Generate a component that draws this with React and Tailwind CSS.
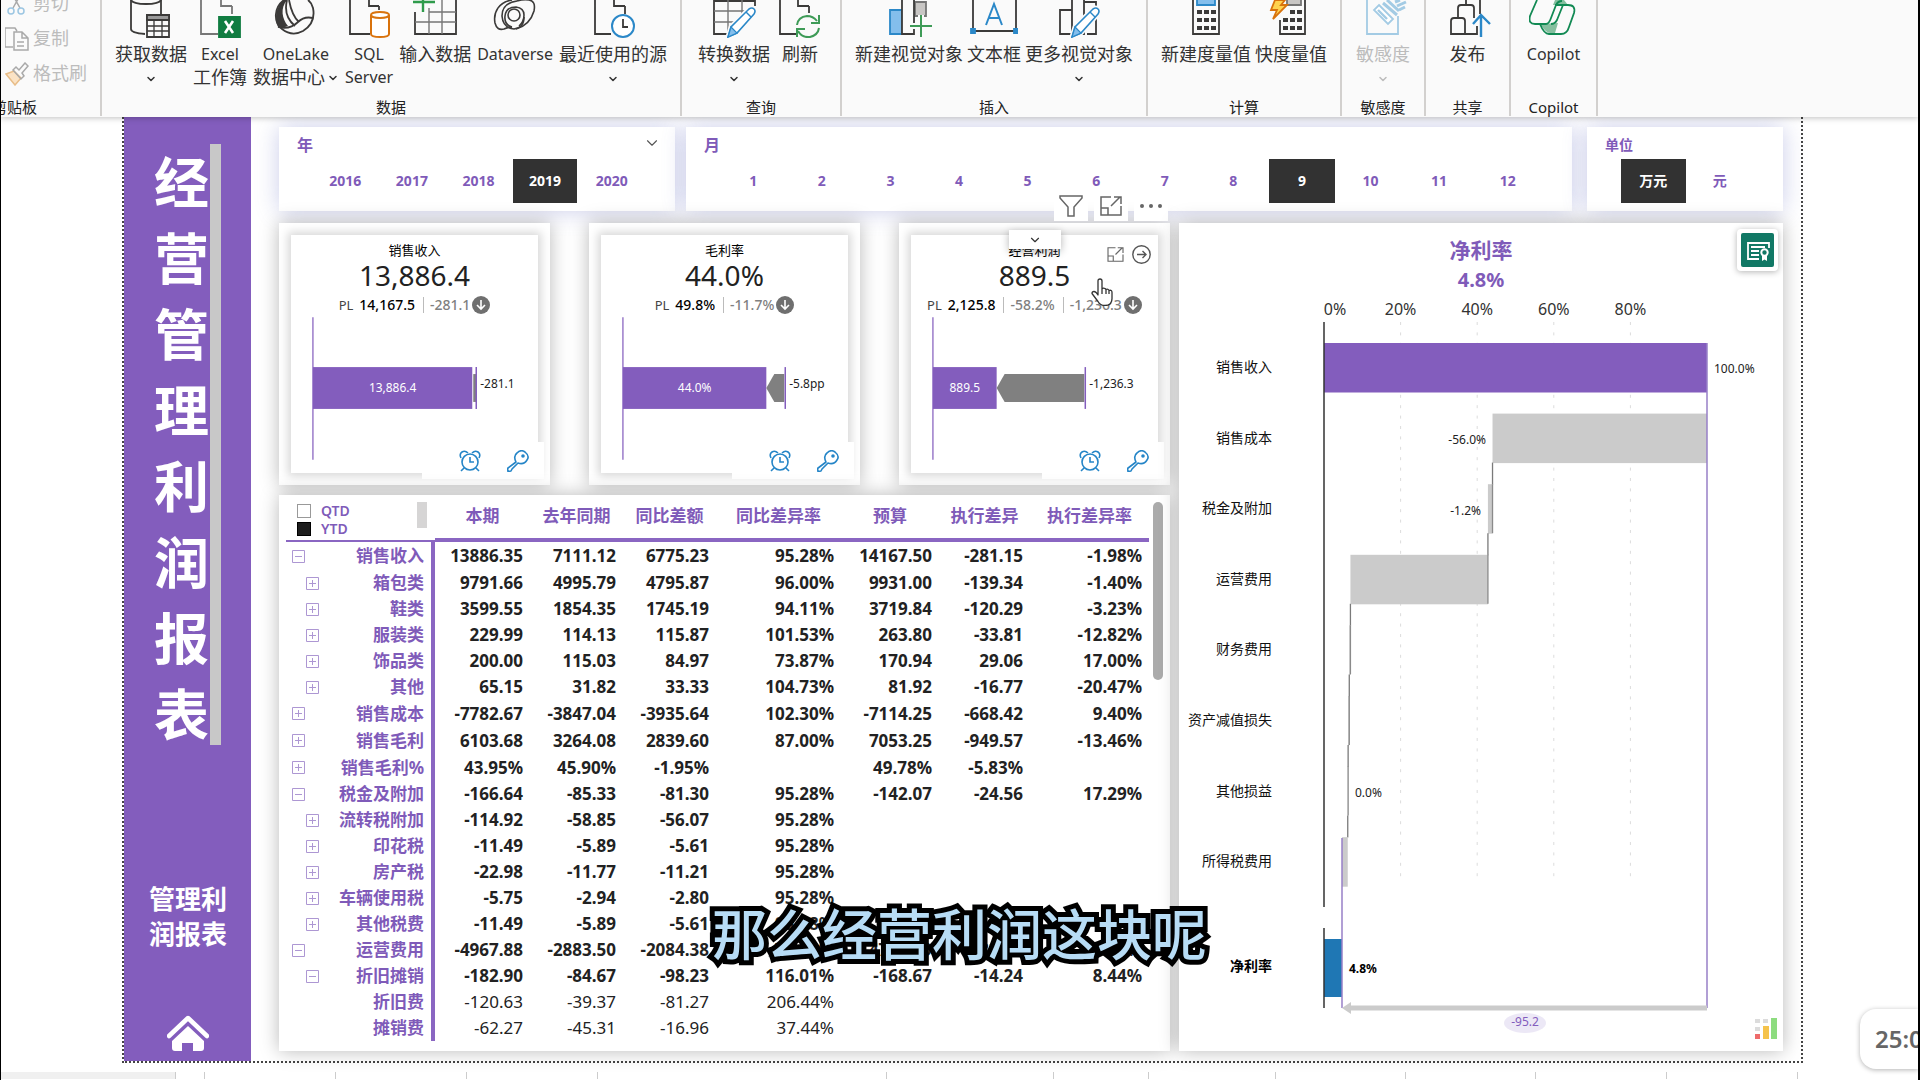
import { useState } from "react";
import { ChevronDown } from "lucide-react";

const FONT = "font-['Noto_Sans','Noto_Sans_CJK_SC',sans-serif]";

const YEARS = ["2016", "2017", "2018", "2019", "2020"];
const MONTHS = ["1", "2", "3", "4", "5", "6", "7", "8", "9", "10", "11", "12"];
const UNITS = ["万元", "元"];

const COLUMNS = ["本期", "去年同期", "同比差额", "同比差异率", "预算", "执行差异", "执行差异率"];

// level: 缩进层级, open: 是否展开 (null = 没有下级)
const ROWS = [
  { name: "销售收入", level: 0, open: true, values: ["13886.35", "7111.12", "6775.23", "95.28%", "14167.50", "-281.15", "-1.98%"] },
  { name: "箱包类", level: 1, open: false, values: ["9791.66", "4995.79", "4795.87", "96.00%", "9931.00", "-139.34", "-1.40%"] },
  { name: "鞋类", level: 1, open: false, values: ["3599.55", "1854.35", "1745.19", "94.11%", "3719.84", "-120.29", "-3.23%"] },
  { name: "服装类", level: 1, open: false, values: ["229.99", "114.13", "115.87", "101.53%", "263.80", "-33.81", "-12.82%"] },
  { name: "饰品类", level: 1, open: false, values: ["200.00", "115.03", "84.97", "73.87%", "170.94", "29.06", "17.00%"] },
  { name: "其他", level: 1, open: false, values: ["65.15", "31.82", "33.33", "104.73%", "81.92", "-16.77", "-20.47%"] },
  { name: "销售成本", level: 0, open: false, values: ["-7782.67", "-3847.04", "-3935.64", "102.30%", "-7114.25", "-668.42", "9.40%"] },
  { name: "销售毛利", level: 0, open: false, values: ["6103.68", "3264.08", "2839.60", "87.00%", "7053.25", "-949.57", "-13.46%"] },
  { name: "销售毛利%", level: 0, open: false, values: ["43.95%", "45.90%", "-1.95%", "", "49.78%", "-5.83%", ""] },
  { name: "税金及附加", level: 0, open: true, values: ["-166.64", "-85.33", "-81.30", "95.28%", "-142.07", "-24.56", "17.29%"] },
  { name: "流转税附加", level: 1, open: false, values: ["-114.92", "-58.85", "-56.07", "95.28%", "", "", ""] },
  { name: "印花税", level: 1, open: false, values: ["-11.49", "-5.89", "-5.61", "95.28%", "", "", ""] },
  { name: "房产税", level: 1, open: false, values: ["-22.98", "-11.77", "-11.21", "95.28%", "", "", ""] },
  { name: "车辆使用税", level: 1, open: false, values: ["-5.75", "-2.94", "-2.80", "95.28%", "", "", ""] },
  { name: "其他税费", level: 1, open: false, values: ["-11.49", "-5.89", "-5.61", "95.28%", "", "", ""] },
  { name: "运营费用", level: 0, open: true, values: ["-4967.88", "-2883.50", "-2084.38", "72.29%", "-4785.39", "-182.49", "3.81%"] },
  { name: "折旧摊销", level: 1, open: true, values: ["-182.90", "-84.67", "-98.23", "116.01%", "-168.67", "-14.24", "8.44%"] },
  { name: "折旧费", level: 2, open: null, values: ["-120.63", "-39.37", "-81.27", "206.44%", "", "", ""] },
  { name: "摊销费", level: 2, open: null, values: ["-62.27", "-45.31", "-16.96", "37.44%", "", "", ""] },
];

const rowHeight = (row, i) => {
  if (i === 0) return "h-7";
  return row.level === 0 && !row.open ? "h-[27px]" : "h-[26px]";
};

/* ---------- ribbon icons, 48 x 38, top part is scrolled away ---------- */

const Pencil = ({ x }) => (
  <g transform={`translate(${x} 0)`}>
    <path d="M3 37l3-10L24 9q3-2 5 0t0 5L12 33z" fill="#fff" stroke="#fafafa" strokeWidth="5" />
    <path d="M3 37l3-10L24 9q3-2 5 0t0 5L12 33z" fill="#fff" stroke="#2b88c8" strokeWidth="1.6" />
    <path d="M3 37l3-10 6 6z" fill="#83beec" stroke="#2b88c8" strokeWidth="1.2" />
    <path d="M21 12l5 5" stroke="#2b88c8" strokeWidth="1.4" />
  </g>
);

const ICONS = {
  database: (
    <g>
      <path d="M4 0v29q0 4 14 5M34 0v14" />
      <path d="M4 0q2 4 15 4t15-4" />
      <path d="M20 15h22v22H20z" fill="#fafafa" />
      <path d="M20 15h22v5H20z" fill="#9a9a9a" />
      <path d="M27 20v17M35 20v17M20 26h22M20 31h22" strokeWidth="1.3" />
    </g>
  ),
  excel: (
    <g>
      <path d="M22 34H5V0M25 0v6h11M36 6v8" stroke="#767676" />
      <path d="M23 17h21v20H23z" fill="#107c41" stroke="#107c41" />
      <path d="M29 21l8 12M37 21l-8 12" stroke="#fff" strokeWidth="2.6" />
    </g>
  ),
  onelake: (
    <g>
      <path d="M12 0C4 6 2 18 6 27q6 1 10-1C10 19 8 8 15 0z" fill="#3b3a39" stroke="none" />
      <path d="M12 0C2 7 1 22 10 29q10 8 21 2Q44 23 41 8q-1-5-5-8" />
      <path d="M15 0q-4 16 8 26M17 0q3 16 10 22M6 27q12 3 20-5 6-6 15-4" />
    </g>
  ),
  sql: (
    <g>
      <path d="M25 34H5V0M24 0v6h10M34 6v4" />
      <path d="M26 15v19q0 3 9 3t9-3V15" fill="#fff" stroke="#d9730d" strokeWidth="2" />
      <ellipse cx="35" cy="15" rx="9" ry="3" fill="#fff" stroke="#d9730d" strokeWidth="2" />
    </g>
  ),
  table: (
    <g>
      <path d="M4 12v22h41V0" />
      <path d="M4 22h41M18 12h27M18 8v26M31 0v34" stroke="#767676" strokeWidth="1.4" />
      <path d="M2 2h22M12 0v12" stroke="#2f9b4b" strokeWidth="2.4" />
    </g>
  ),
  dataverse: (
    <g strokeWidth="1.6">
      <path d="M21 0C8 2 2 12 4 23q2 8 9 6 4-2 8-2" />
      <path d="M21 27q-8-2-7-11T25 7q8 1 8 8t-5 11" />
      <path d="M25 29Q39 25 43 11 45 1 38 0q-5-1-12 1" />
      <path d="M26 1Q11 3 11 16q1 12 12 13 10-1 10-12" />
      <circle cx="23" cy="15" r="6" />
    </g>
  ),
  recent: (
    <g>
      <path d="M22 34H6V0M25 0v6h11M36 6v8" />
      <circle cx="34" cy="26" r="11" fill="#fff" stroke="#2b88c8" strokeWidth="2" />
      <path d="M34 19v8h5" />
    </g>
  ),
  transform: (
    <g>
      <path d="M4 0v34h20M45 0v6M4 1h41" />
      <path d="M4 11h36M4 22h26M18 0v33M32 0v16" stroke="#767676" strokeWidth="1.4" />
      <Pencil x={15} />
    </g>
  ),
  refresh: (
    <g>
      <path d="M20 34H4V0M22 0v6h11M33 6v7" />
      <path d="M21 25q1-8 10-9 6 0 10 5M43 28q-1 7-9 9-8 1-12-6M43 15v8h-8M21 37v-8h8" stroke="#3e9b57" strokeWidth="2" />
    </g>
  ),
  newVisual: (
    <g>
      <path d="M5 10h12v24H5z" fill="#83beec" stroke="#2b88c8" />
      <path d="M30 2h11v14H30z" fill="#c8c6c4" stroke="#767676" />
      <path d="M17 0v34h12V0" fill="#fafafa" />
      <path d="M25 26h23M36 15v23" stroke="#fafafa" strokeWidth="6" />
      <path d="M25 26h22M36 15v22" stroke="#3e9b57" strokeWidth="2" />
    </g>
  ),
  textBox: (
    <g>
      <path d="M3 0v31h43V0" />
      <path d="M1 29h4v4H1zM44 29h4v4h-4z" fill="#2b88c8" stroke="#2b88c8" />
      <path d="M16 25L24 4l8 21M19 18h10" stroke="#2b88c8" strokeWidth="2" />
    </g>
  ),
  moreVisual: (
    <g>
      <path d="M5 10h12v24H5zM17 34V0M29 0v34H17M29 2h12v32h-9" />
      <Pencil x={14} />
    </g>
  ),
  calculator: (
    <g>
      <path d="M11 0v34h26V0" />
      <path d="M15 0v5h18V0" fill="#83beec" stroke="#2b88c8" />
      <path d="M15 10h5v4h-5zM22 10h5v4h-5zM29 10h5v4h-5zM15 18h5v4h-5zM22 18h5v4h-5zM29 18h5v4h-5zM15 26h5v4h-5zM22 26h5v4h-5zM29 26h5v4h-5z" fill="#3b3a39" stroke="none" />
    </g>
  ),
  quick: (
    <g>
      <path d="M13 20v14h25V0" />
      <path d="M20 0v5h14V0" fill="#c8c6c4" stroke="#767676" />
      <path d="M16 18h5v4h-5zM23 18h5v4h-5zM30 18h5v4h-5zM23 10h5v4h-5zM30 10h5v4h-5zM16 26h5v4h-5zM23 26h5v4h-5zM30 26h5v4h-5z" fill="#3b3a39" stroke="none" />
      <path d="M8 0L4 10h6L6 19 20 5h-6l4-5z" fill="#ffd34e" stroke="#d9730d" />
    </g>
  ),
  sensitivity: (
    <g stroke="#a3cbe4">
      <path d="M8 0v34h31V16" />
      <path d="M20 5l14 14-5 5L15 10z" fill="#fff" />
      <path d="M19 10l9 9" strokeWidth="2.4" />
      <path d="M24 3l14 12M28 0l12 11M36 2l5-2M38 6l9-4M40 10l6-3" strokeWidth="3" />
    </g>
  ),
  publish: (
    <g>
      <path d="M7 34V21q0-3 3-3h8q3 0 3 3v13zM14 18V8q0-3 3-3h10q3 0 3 3v10M21 34h12V26M22 5V0M36 0v14" />
      <path d="M37 37V15M29 24l8-9 9 9" stroke="#2b88c8" strokeWidth="2.4" />
    </g>
  ),
  copilot: (
    <g stroke="#128a54">
      <path d="M11 24q6 9 10 9h5l3-10z" fill="#85bf9f" stroke="none" />
      <path d="M26 0l-2 5h15l-4-5z" fill="#85bf9f" stroke="none" />
      <path d="M8 0L1 16q-2 8 5 8h11q3 0 5-6l5-13q2-4 6-4" />
      <path d="M33 5h6q8 0 6 8l-5 14q-2 7-8 7H20q-5 0-9-10M26 5h8L28 20q-2 4-6 4" />
    </g>
  ),
};

const RibbonIcon = ({ name }) => (
  <svg className="block h-[38px] w-12" viewBox="0 0 48 38" fill="none" stroke="#3b3a39" strokeWidth="1.8" aria-hidden="true">
    {ICONS[name]}
  </svg>
);

const RibbonButton = ({ icon, label, second, latin, arrow, inlineArrow, disabled }) => (
  <button
    type="button"
    disabled={disabled}
    className={`flex flex-col items-center whitespace-nowrap text-lg/[23px] ${disabled ? "text-[#bcbcbc]" : "text-[#333]"}`}
  >
    <RibbonIcon name={icon} />
    <span className={`mt-[5px] h-[23px] ${latin ? "text-base/[23px]" : ""}`}>{label}</span>
    {second && (
      <span className={`flex h-[23px] items-center ${second === "Server" ? "text-base/[23px]" : ""}`}>
        {second}
        {inlineArrow && <ChevronDown size={12} strokeWidth={3} className="ml-0.5" />}
      </span>
    )}
    {arrow && <ChevronDown size={12} strokeWidth={3} className="mt-[7px]" />}
  </button>
);

const RibbonGroup = ({ title, className, wide, children }) => (
  <div className={`flex flex-col justify-between border-r-2 border-[#d2d0ce] ${className}`}>
    <div className={`flex items-start justify-center ${wide ? "gap-1.5" : "gap-1"}`}>{children}</div>
    <div className="text-center text-[15px]/[18px] text-[#222]">{title}</div>
  </div>
);

const Clipboard = () => (
  <div className="flex w-[101px] flex-col justify-between overflow-hidden border-r-2 border-[#d2d0ce]">
    <div className="-mt-[14px] flex flex-col text-lg/[35px] text-[#bcbcbc]">
      <button type="button" disabled className="flex items-center gap-1 pl-1">
        <svg className="h-6 w-6" viewBox="0 0 24 24" fill="none" stroke="#a9a9a9" strokeWidth="1.5">
          <path d="M6 0l9 16M17 0L8 16" />
          <circle cx="6" cy="19" r="3" stroke="#9cc6e2" />
          <circle cx="16" cy="19" r="3" stroke="#9cc6e2" />
        </svg>
        剪切
      </button>
      <button type="button" disabled className="flex items-center gap-1 pl-1">
        <svg className="h-6 w-6" viewBox="0 0 24 24" fill="none" stroke="#a9a9a9" strokeWidth="1.5">
          <path d="M8 20H0V1h10l2 3M9 5h8l6 6v12H9zM17 5v6h6M12 15h7M12 19h7" />
        </svg>
        复制
      </button>
      <button type="button" disabled className="flex items-center gap-1 pl-1">
        <svg className="h-6 w-6" viewBox="0 0 24 24" fill="none" stroke="#a9a9a9" strokeWidth="1.5">
          <path d="M1 12l8-3 7 7-6 7z" fill="#fbe3c5" stroke="#e8bd88" />
          <path d="M8 8l3-3 3 3 6-7 3 3-6 7 2 3-3 3z" />
        </svg>
        格式刷
      </button>
    </div>
    <div className="flex w-9 justify-end whitespace-nowrap text-[15px]/[18px] text-[#222]">剪贴板</div>
  </div>
);

const Ribbon = () => (
  <header className="relative z-10 flex h-[117px] overflow-hidden bg-[#fafafa] pb-px shadow-[0_1px_6px_rgba(0,0,0,0.25)]">
    <Clipboard />
    <RibbonGroup title="数据" wide className="w-[580px]">
      <RibbonButton icon="database" label="获取数据" arrow />
      <RibbonButton icon="excel" label="Excel" latin second="工作簿" />
      <RibbonButton icon="onelake" label="OneLake" latin second="数据中心" inlineArrow />
      <RibbonButton icon="sql" label="SQL" latin second="Server" />
      <RibbonButton icon="table" label="输入数据" />
      <RibbonButton icon="dataverse" label="Dataverse" latin />
      <RibbonButton icon="recent" label="最近使用的源" arrow />
    </RibbonGroup>
    <RibbonGroup title="查询" wide className="w-[160px]">
      <RibbonButton icon="transform" label="转换数据" arrow />
      <RibbonButton icon="refresh" label="刷新" />
    </RibbonGroup>
    <RibbonGroup title="插入" className="w-[306px]">
      <RibbonButton icon="newVisual" label="新建视觉对象" />
      <RibbonButton icon="textBox" label="文本框" />
      <RibbonButton icon="moreVisual" label="更多视觉对象" arrow />
    </RibbonGroup>
    <RibbonGroup title="计算" className="w-[194px]">
      <RibbonButton icon="calculator" label="新建度量值" />
      <RibbonButton icon="quick" label="快度量值" />
    </RibbonGroup>
    <RibbonGroup title="敏感度" className="w-[84px]">
      <RibbonButton icon="sensitivity" label="敏感度" arrow disabled />
    </RibbonGroup>
    <RibbonGroup title="共享" className="w-[85px]">
      <RibbonButton icon="publish" label="发布" />
    </RibbonGroup>
    <RibbonGroup title="Copilot" className="w-[87px]">
      <RibbonButton icon="copilot" label="Copilot" latin />
    </RibbonGroup>
  </header>
);

/* ---------- left title bar ---------- */

const SideBar = () => (
  <aside className="flex w-[127px] shrink-0 flex-col bg-[#835dbd] pt-[27px] pb-[10px] font-bold text-white">
    <div className="flex items-start pl-[30px]">
      <h1 className="w-[56px] text-[55px]/[76px]">经营管理利润报表</h1>
      <div className="h-[601px] w-[11px] bg-[#c8c8c8]"></div>
    </div>
    <p className="mt-[130px] ml-[25px] w-[80px] text-[26px]/[35px]">管理利润报表</p>
    <a href="#home" aria-label="home" className="mt-auto ml-[43px] block w-[42px]">
      <svg className="block h-9 w-[42px]" viewBox="0 0 42 36" fill="#fff">
        <path d="M21 11L5 26v7q0 3 3 3h7v-8h11v8h8q3 0 3-3v-7z" />
        <path d="M2 21L21 3l19 18" fill="none" stroke="#fff" strokeWidth="4.5" strokeLinecap="round" strokeLinejoin="round" />
      </svg>
    </a>
  </aside>
);

/* ---------- slicers ---------- */

const SlicerCard = ({ title, small, className, children, dropdown }) => (
  <section className={`relative h-[84px] bg-white pt-2 shadow-[0_0_22px_rgba(90,100,190,0.32)] ${className}`}>
    <h2 className={`pl-[18px] font-bold text-[#7f5bb9] ${small ? "text-sm/5" : "text-base/5"}`}>{title}</h2>
    {dropdown && <ChevronDown size={18} strokeWidth={1.5} className="absolute top-[7px] right-[14px] text-[#555]" />}
    {children}
  </section>
);

const SlicerButton = ({ text, active, onClick }) => (
  <button
    type="button"
    onClick={onClick}
    aria-pressed={active}
    className={`mx-px h-11 text-sm font-bold ${active ? "bg-[#323232] text-white" : "text-[#7f5bb9]"}`}
  >
    {text}
  </button>
);

/* ---------- KPI cards ---------- */

const AlarmIcon = () => (
  <svg className="h-[22px] w-[22px]" viewBox="0 0 22 22" fill="none" stroke="#2585c7" strokeWidth="1.6">
    <circle cx="11" cy="12" r="8" />
    <path d="M11 7v5h4M5 18l-3 3M17 18l3 3M2 8Q0 4 3 2t6 1M20 8q2-4-1-6t-6 1" />
  </svg>
);

const KeyIcon = () => (
  <svg className="h-[22px] w-[22px]" viewBox="0 0 22 22" fill="none" stroke="#2585c7" strokeWidth="1.6">
    <path d="M9 12Q6 6 10 3q4-4 8-1 5 4 2 8-3 5-9 3l-6 6-1 2-3 .5-.5-3z" strokeLinejoin="round" />
    <circle cx="16" cy="6" r="1" fill="#2585c7" />
  </svg>
);

const PopoutIcon = ({ className }) => (
  <svg className={className} viewBox="0 0 22 20" fill="none" stroke="#666" strokeWidth="1.5">
    <path d="M11 1H1v18h20V10M1 12h7v7M11 10l9-9M14 1h7v7" />
  </svg>
);

const KpiCard = ({ title, value, plan, diffs, bar, gap, mid, diffLabel, children }) => (
  <section className="relative w-[271px] bg-white p-3 shadow-[0_0_18px_rgba(0,0,0,0.28)]">
    <div className="flex h-[238px] flex-col bg-white pt-[5px] shadow-[0_0_9px_3px_rgba(0,0,0,0.16)]">
      <h3 className="text-center text-[13px]/5 text-black">{title}</h3>
      <div className="text-center text-[28px]/[31px] text-[#222]">{value}</div>
      <div className="mt-1 flex h-5 items-center justify-center whitespace-nowrap text-sm font-medium text-[#808080]">
        <span className="mr-1.5 text-[13px] font-normal text-[#444]">PL</span>
        <span className="text-black">{plan}</span>
        {diffs.map((d) => (
          <span key={d} className="ml-2 border-l border-[#bbb] pl-1.5 leading-4">{d}</span>
        ))}
        <svg className="ml-0.5 h-[18px] w-[18px]" viewBox="0 0 18 18">
          <circle cx="9" cy="9" r="9" fill="#6f6f6f" />
          <path d="M9 4v9M5 9l4 4 4-4" stroke="#fff" strokeWidth="1.6" fill="none" />
        </svg>
      </div>
      <svg className="mt-0.5 h-[143px] w-full" viewBox="0 0 248 143" fontSize="12">
        <path d="M22 0v143" stroke="#9a7bc9" strokeWidth="1.5" />
        <rect x="22" y="50" width={bar} height="42" fill="#835dbd" />
        <path
          d={gap > 8 ? `M${22 + bar} 71l8-14h${gap - 8}v28h-${gap - 8}z` : `M${23 + bar} 57h${gap}v28h-${gap}z`}
          fill="#808080"
        />
        <path d={`M${23 + bar + gap} 50v42`} stroke="#835dbd" strokeWidth="1.5" />
        <text x={22 + bar / 2} y="75" fill="#fff" textAnchor="middle">{mid}</text>
        <text x={27 + bar + gap} y="71" fill="#222">{diffLabel}</text>
      </svg>
    </div>
    <div className="absolute right-1.5 bottom-1.5 flex h-[37px] w-[122px] items-center justify-end gap-[26px] bg-white pr-[15px]">
      <AlarmIcon />
      <KeyIcon />
    </div>
    {children}
  </section>
);

const HoverTools = () => (
  <>
    <div className="absolute right-0.5 bottom-full mb-0.5 flex gap-1.5">
      <button type="button" aria-label="filter" className="flex h-[30px] w-[34px] items-center justify-center bg-white">
        <svg className="h-[22px] w-6" viewBox="0 0 24 22" fill="none" stroke="#666" strokeWidth="1.5">
          <path d="M1 1h22v2l-8 9v9H9v-9L1 3z" />
        </svg>
      </button>
      <button type="button" aria-label="focus" className="flex h-[30px] w-[34px] items-center justify-center bg-white">
        <PopoutIcon className="h-5 w-[22px]" />
      </button>
      <button type="button" aria-label="more" className="flex h-[30px] w-[34px] items-center justify-center gap-[5px] bg-white">
        <i className="h-1 w-1 rounded-full bg-[#666]"></i>
        <i className="h-1 w-1 rounded-full bg-[#666]"></i>
        <i className="h-1 w-1 rounded-full bg-[#666]"></i>
      </button>
    </div>
    <div className="absolute top-[7px] left-[110px] flex h-[19px] w-[52px] items-center justify-center bg-white shadow-[0_2px_8px_rgba(0,0,0,0.3)]">
      <ChevronDown size={14} strokeWidth={2} className="text-[#333]" />
    </div>
    <div className="absolute top-[22px] right-[19px] flex items-center gap-2">
      <PopoutIcon className="h-[15px] w-[17px]" />
      <svg className="h-[19px] w-[19px]" viewBox="0 0 19 19" fill="none" stroke="#555" strokeWidth="1.4">
        <circle cx="9.5" cy="9.5" r="8.7" />
        <path d="M5 9.5h9M10.5 6l3.5 3.5-3.5 3.5" />
      </svg>
    </div>
    <svg className="absolute top-[55px] right-[57px] h-7 w-[22px]" viewBox="0 0 22 28" fill="#fff" stroke="#333" strokeWidth="1.3" strokeLinejoin="round">
      <path d="M7 17V3q0-2 2-2t2 2v8q1-1.5 3-.5l1 1q2-1 3 1 3-1 3 2v6q0 7-7 7-5 0-7-4l-6-8q0-2 2-2t4 3.5zM11 11v5M15 12v4M18 13v3" />
    </svg>
  </>
);

/* ---------- matrix ---------- */

const Matrix = () => {
  const [period, setPeriod] = useState("YTD");

  return (
    <section className="relative bg-white pt-[7px] pr-[21px] pb-[10px] pl-[7px] shadow-[0_0_18px_rgba(0,0,0,0.28)]">
      <table className="w-full table-fixed border-separate border-spacing-0 text-[17px]/[26px]">
        <colgroup>
          <col className="w-[149px]" />
          <col className="w-[95px]" />
          <col className="w-[93px]" />
          <col className="w-[93px]" />
          <col className="w-[125px]" />
          <col className="w-[98px]" />
          <col className="w-[91px]" />
          <col className="w-[119px]" />
        </colgroup>
        <thead>
          <tr className="h-10">
            <th className="border-b-2 border-[#8a66c2] p-0 align-top">
              <div className="flex justify-between pr-2 pl-[11px]">
                <div className="flex flex-col text-sm/[18px] font-semibold text-[#7f5bb9]">
                  {["QTD", "YTD"].map((p) => (
                    <label key={p} className="flex items-center gap-[10px]">
                      <input
                        type="checkbox"
                        checked={period === p}
                        onChange={() => setPeriod(p)}
                        className="h-[14px] w-[14px] appearance-none border border-[#999] bg-white checked:border-black checked:bg-[#1d1d1d]"
                      />
                      {p}
                    </label>
                  ))}
                </div>
                <div className="h-[26px] w-[10px] bg-[#d6d5d5]"></div>
              </div>
            </th>
            {COLUMNS.map((c) => (
              <th key={c} className="border-b-4 border-[#8a66c2] p-0 pb-2 text-center font-bold text-[#7f5bb9]">{c}</th>
            ))}
          </tr>
        </thead>
        <tbody>
          {ROWS.map((row, idx) => (
            <tr key={row.name} className={rowHeight(row, idx)}>
              <th className="border-r-4 border-[#8a66c2] p-0 font-bold text-[#7f5bb9]">
                <div className={`flex items-center pr-[7px] ${row.level === 0 ? "pl-1.5" : "pl-5"}`}>
                  {row.open !== null && (
                    <button type="button" aria-label={row.open ? "collapse" : "expand"}>
                      <svg className="h-[13px] w-[13px]" viewBox="0 0 13 13" fill="none" stroke="#ad97d3">
                        <path d={row.open ? "M.5.5h12v12H.5zM3 6.5h7" : "M.5.5h12v12H.5zM3 6.5h7M6.5 3v7"} />
                      </svg>
                    </button>
                  )}
                  <span className="ml-auto">{row.name}</span>
                </div>
              </th>
              {row.values.map((v, i) => (
                <td key={i} className={`p-0 pr-[7px] text-right text-[#222] ${row.level < 2 ? "font-bold" : ""}`}>{v}</td>
              ))}
            </tr>
          ))}
        </tbody>
      </table>
      <div className="absolute top-[7px] right-[7px] h-[178px] w-[10px] rounded-full bg-[#ababab]"></div>
    </section>
  );
};

/* ---------- waterfall ---------- */

const STEPS = [
  { name: "销售收入", from: 0, to: 100 },
  { name: "销售成本", from: 100, to: 44 },
  { name: "税金及附加", from: 44, to: 42.8 },
  { name: "运营费用", from: 42.8, to: 6.9 },
  { name: "财务费用", from: 6.9, to: 6.6 },
  { name: "资产减值损失", from: 6.6, to: 6.3 },
  { name: "其他损益", from: 6.3, to: 6.2 },
  { name: "所得税费用", from: 6.2, to: 4.7 },
];

const sx = (v) => 145 + v * 3.83;
const sy = (i) => 47 + i * 70.6;

const Waterfall = () => (
  <section className="relative w-[604px] shrink-0 bg-white pt-[13px] shadow-[0_0_18px_rgba(0,0,0,0.28)]">
    <div className="text-center font-bold text-[#7f5bb9]">
      <h2 className="text-[21px]/7">净利率</h2>
      <div className="text-xl/8">4.8%</div>
    </div>
    <svg className="w-full" viewBox="0 0 604 750" fill="none">
      <g fontSize="16" fill="#333" textAnchor="middle">
        <text x="156" y="19">0%</text>
        {[20, 40, 60, 80].map((v) => (
          <g key={v}>
            <text x={sx(v)} y="19">{v}%</text>
            <path d={`M${sx(v)} 26v560`} stroke="#dcdcdc" strokeDasharray="3 7.4" />
          </g>
        ))}
      </g>
      {STEPS.map((s, i) => {
        const left = Math.min(sx(s.from), sx(s.to));
        const width = Math.abs(sx(s.from) - sx(s.to));
        return (
          <g key={s.name}>
            <text x="93" y={sy(i) + 29} fontSize="14" fill="#111" textAnchor="end">{s.name}</text>
            <rect x={left} y={sy(i)} width={width} height="49.5" fill={i === 0 ? "#835dbd" : "#cbcbcb"} />
            {i > 0 && i < 7 && <path d={`M${sx(s.to)} ${sy(i) + 49}v22`} stroke="#7a7a7a" strokeWidth="1.3" />}
            {i > 1 && i < 7 && <path d={`M${sx(s.from)} ${sy(i)}v49`} stroke="#8a8a8a" strokeWidth="1.3" />}
          </g>
        );
      })}
      <g fontSize="12" fill="#222">
        <text x="535" y="77">100.0%</text>
        <text x="307" y="148" textAnchor="end">-56.0%</text>
        <text x="302" y="219" textAnchor="end">-1.2%</text>
        <text x="176" y="501">0.0%</text>
        <text x="170" y="677" fontWeight="700" fill="#000">4.8%</text>
      </g>
      <text x="93" y="675" fontSize="14" fontWeight="600" fill="#000" textAnchor="end">净利率</text>
      <rect x="145" y="643" width="18" height="58" fill="#1f77b4" />
      <path d="M145 26v585M145 632v80" stroke="#333" strokeWidth="1.5" />
      <path d="M528 47v665M163 542v170" stroke="#9880c8" strokeWidth="1.5" />
      <path d="M528 712H170" stroke="#cbcbcb" strokeWidth="5" />
      <path d="M163 712l9-6v12z" fill="#cbcbcb" />
      <ellipse cx="346" cy="727" rx="21" ry="10" fill="#ece8f6" />
      <text x="346" y="730" fontSize="12" fill="#835dbd" textAnchor="middle">-95.2</text>
    </svg>
    <div className="absolute top-1.5 right-[5px] rounded-sm bg-white p-1 shadow-[0_1px_6px_rgba(0,0,0,0.3)]">
      <svg className="block h-[34px] w-[33px]" viewBox="0 0 33 34" fill="none">
        <rect width="33" height="34" rx="2" fill="#117865" />
        <path d="M18 26H7V10h21v5M10 14h14M10 18h8M10 22h8" stroke="#fff" strokeWidth="1.8" />
        <circle cx="23.5" cy="19.5" r="3.2" stroke="#fff" strokeWidth="2" />
        <path d="M21 22v6l2.500-1.500L26 28v-6z" fill="#fff" />
      </svg>
    </div>
    <svg className="absolute right-1.5 bottom-3 h-[21px] w-[22px]" viewBox="0 0 22 21">
      <path d="M0 1h5v4H0zM8 1h5v4H8zM0 9h5v4H0z" fill="#dcdcdc" />
      <path d="M0 16h5v5H0z" fill="#ee6b6b" />
      <path d="M8 8h6v13H8z" fill="#f5c34b" />
      <path d="M16 0h6v21h-6z" fill="#8ddc7f" />
    </svg>
  </section>
);

/* ---------- page tabs, only the top edge is visible ---------- */

const PageTabs = () => (
  <footer className="mt-[9px] flex h-[7px] overflow-hidden *:border-r *:border-[#ccc]">
    <div className="w-[175px] bg-[#f0f0f0]"></div>
    <div className="w-[29px]"></div>
    <div className="w-[131px]"></div>
    <div className="w-[131px]"></div>
    <div className="w-[131px]"></div>
    <div className="w-[289px]"></div>
    <div className="w-[167px]"></div>
    <div className="w-[95px]"></div>
    <div className="w-[127px]"></div>
    <div className="w-[130px]"></div>
    <div className="w-[130px]"></div>
    <div className="w-[131px]"></div>
    <div className="w-[131px]"></div>
  </footer>
);

const App = () => {
  const [year, setYear] = useState("2019");
  const [month, setMonth] = useState("9");
  const [unit, setUnit] = useState("万元");

  return (
    <div className={`relative min-h-screen overflow-hidden border-r-2 border-l border-black bg-white ${FONT}`}>
      <Ribbon />

      <main className="mr-[115px] ml-[121px] flex border-2 border-t-0 border-dotted border-[#444]">
        <SideBar />

        <div className="flex flex-1 flex-col gap-3 pt-[10px] pr-[18px] pb-[10px] pl-7">
          <div className="flex">
            <SlicerCard title="年" dropdown className="mr-[11px] w-[396px]">
              <div className="mt-1 grid grid-cols-5 pr-[30px] pl-[33px]">
                {YEARS.map((y) => (
                  <SlicerButton key={y} text={y} active={year === y} onClick={() => setYear(y)} />
                ))}
              </div>
            </SlicerCard>
            <SlicerCard title="月" className="mr-[15px] flex-1">
              <div className="mt-1 grid grid-cols-12 pr-[30px] pl-[33px]">
                {MONTHS.map((m) => (
                  <SlicerButton key={m} text={m} active={month === m} onClick={() => setMonth(m)} />
                ))}
              </div>
            </SlicerCard>
            <SlicerCard title="单位" small className="w-[196px]">
              <div className="mt-1 grid grid-cols-2 pr-[30px] pl-[33px]">
                {UNITS.map((u) => (
                  <SlicerButton key={u} text={u} active={unit === u} onClick={() => setUnit(u)} />
                ))}
              </div>
            </SlicerCard>
          </div>

          <div className="flex gap-[9px]">
            <div className="flex flex-1 flex-col gap-[10px]">
              <div className="flex justify-between">
                <KpiCard title="销售收入" value="13,886.4" plan="14,167.5" diffs={["-281.1"]} bar={160} gap={3} mid="13,886.4" diffLabel="-281.1" />
                <KpiCard title="毛利率" value="44.0%" plan="49.8%" diffs={["-11.7%"]} bar={144} gap={18} mid="44.0%" diffLabel="-5.8pp" />
                <KpiCard title="经营利润" value="889.5" plan="2,125.8" diffs={["-58.2%", "-1,236.3"]} bar={64} gap={88} mid="889.5" diffLabel="-1,236.3">
                  <HoverTools />
                </KpiCard>
              </div>
              <Matrix />
            </div>
            <Waterfall />
          </div>
        </div>
      </main>

      <PageTabs />

      {/* 字幕 */}
      <p className="absolute inset-x-0 bottom-[106px] text-center text-[55px]/[80px] font-medium text-[#b7dcf5] [-webkit-text-stroke:10px_black] [paint-order:stroke_fill]">
        那么经营利润这块呢
      </p>

      <div className="absolute right-0 bottom-[11px] flex h-[60px] w-[58px] items-center overflow-hidden rounded-l-2xl bg-white pl-[15px] text-2xl font-semibold text-[#666] shadow-[0_1px_5px_rgba(0,0,0,0.3)]">
        25:0
      </div>
    </div>
  );
};

export default App;
